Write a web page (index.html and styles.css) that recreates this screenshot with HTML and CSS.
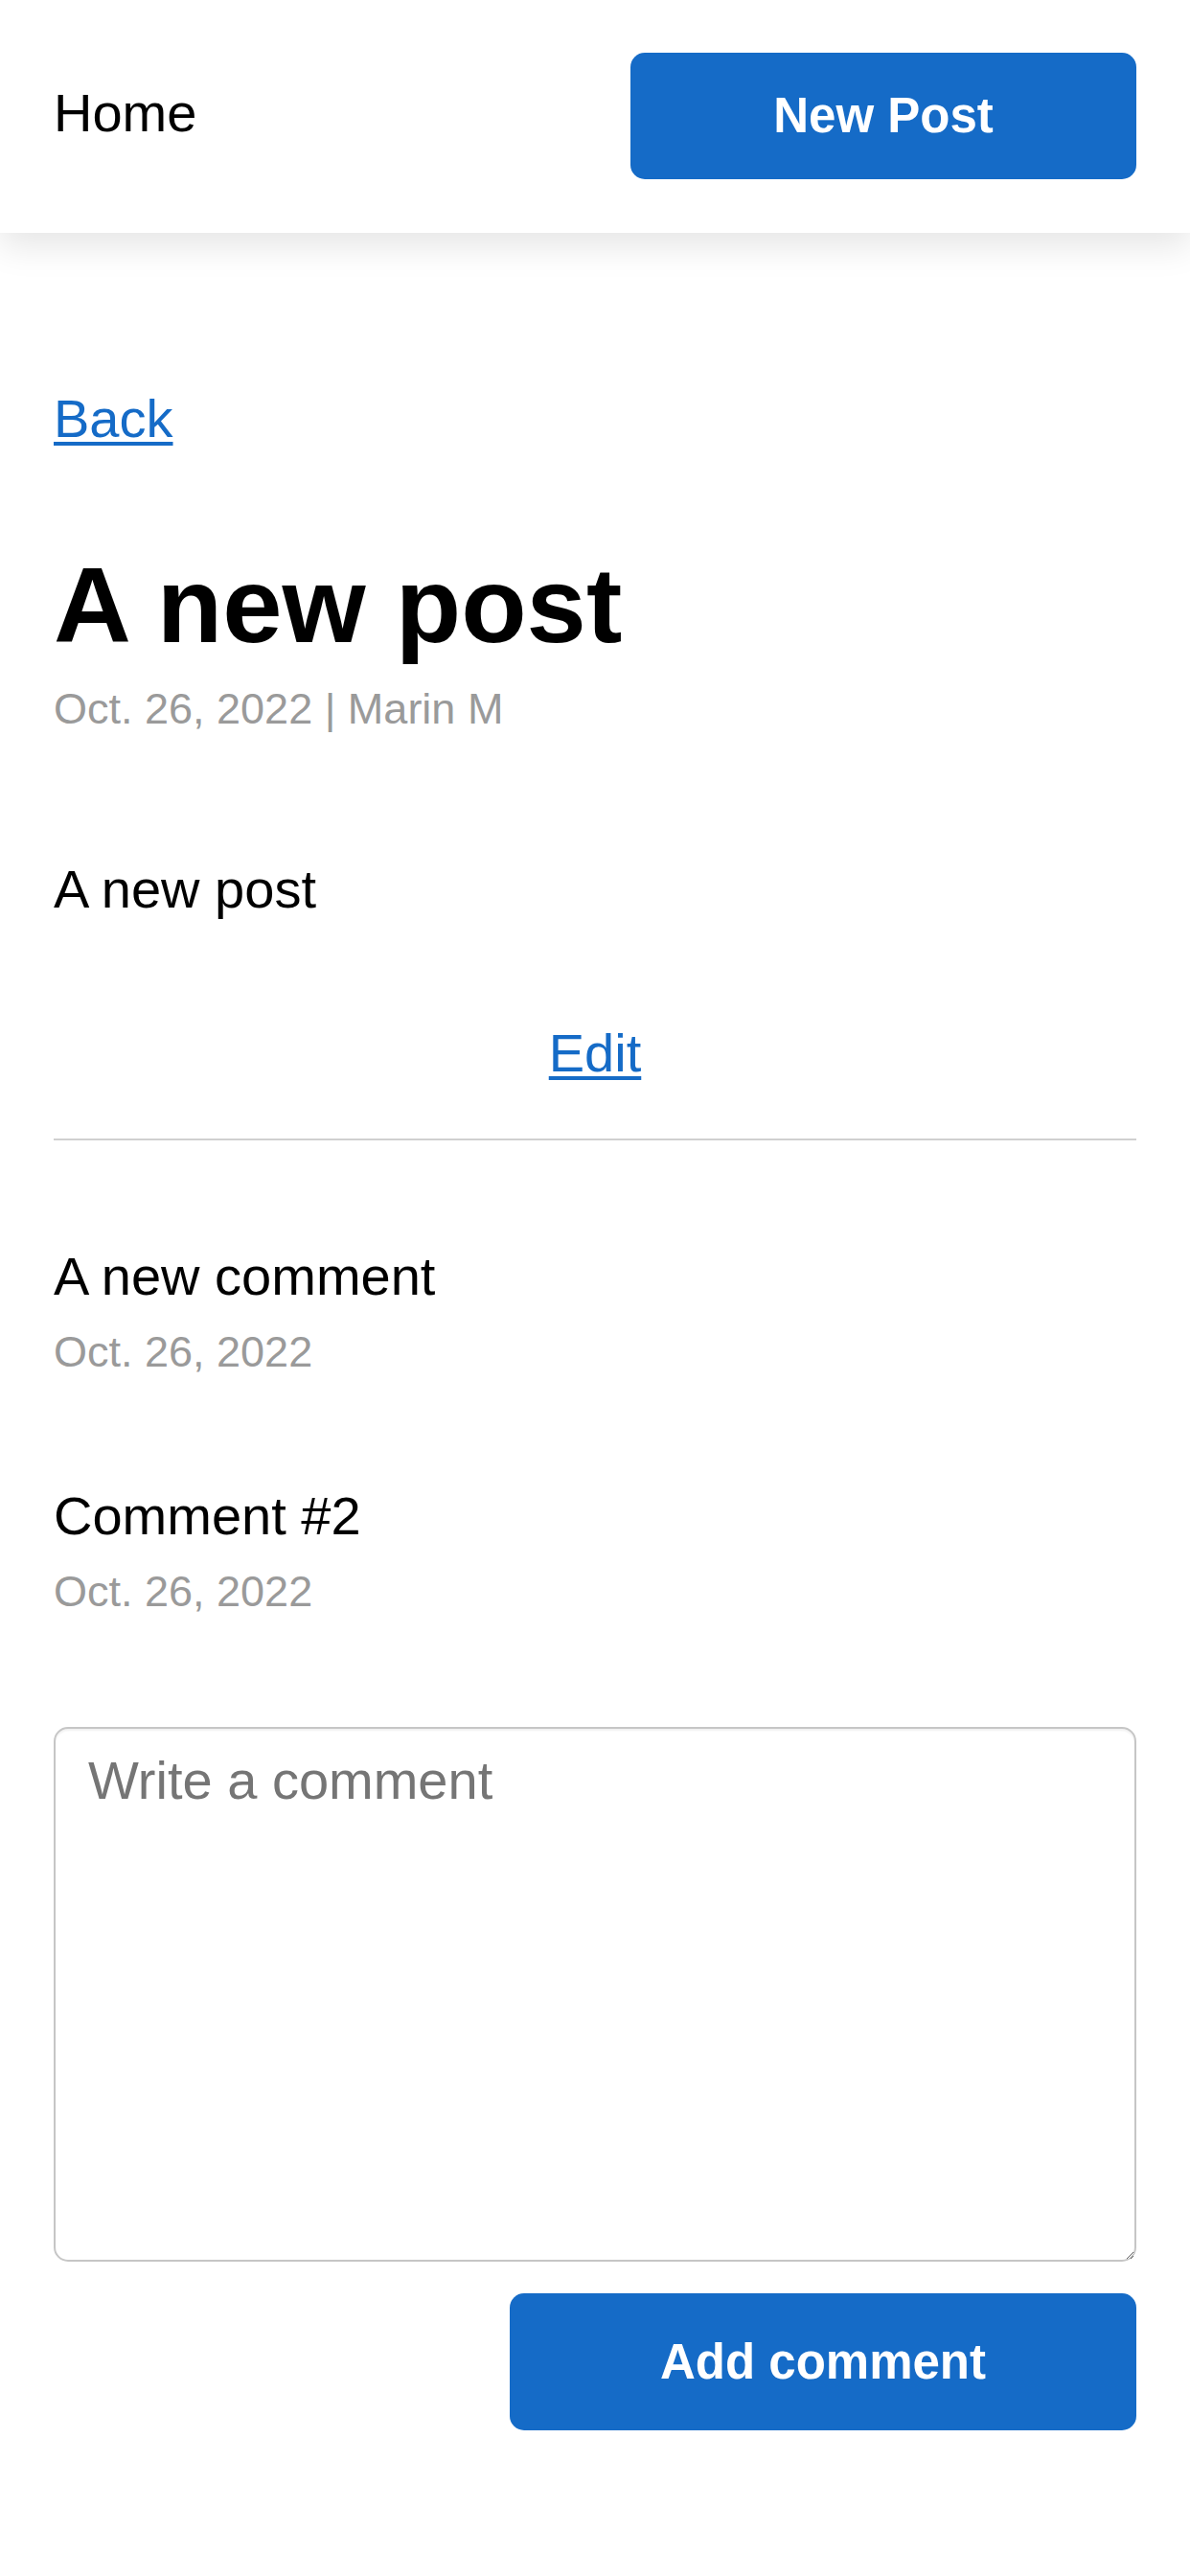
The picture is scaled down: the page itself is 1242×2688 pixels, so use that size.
FILE: index.html
```html
<!DOCTYPE html>
<html lang="en">
<head>
<meta charset="utf-8">
<title>A new post</title>
<link rel="stylesheet" href="styles.css">
</head>
<body>
<header class="topbar">
  <a class="home" href="#">Home</a>
  <a class="btn btn-new" href="#">New Post</a>
</header>
<main class="content">
  <a class="link back" href="#">Back</a>
  <h1 class="title">A new post</h1>
  <p class="meta">Oct. 26, 2022 | Marin M</p>
  <p class="body-text">A new post</p>
  <div class="edit-row"><a class="link" href="#">Edit</a></div>
  <hr class="divider">
  <section class="comments">
    <div class="comment">
      <p class="comment-text">A new comment</p>
      <p class="meta">Oct. 26, 2022</p>
    </div>
    <div class="comment">
      <p class="comment-text">Comment #2</p>
      <p class="meta">Oct. 26, 2022</p>
    </div>
  </section>
  <form class="comment-form">
    <textarea class="comment-input" placeholder="Write a comment"></textarea>
    <div class="form-actions">
      <button type="button" class="btn btn-add">Add comment</button>
    </div>
  </form>
</main>
</body>
</html>
```
FILE: styles.css
```css
* { box-sizing: border-box; }
html, body {
  margin: 0;
  padding: 0;
  background: #ffffff;
}
body {
  font-family: "Liberation Sans", Arial, Helvetica, sans-serif;
  color: #000;
  font-size: 56px;
  line-height: 64px;
}
.topbar {
  height: 243px;
  display: flex;
  align-items: center;
  justify-content: space-between;
  padding: 0 56px;
  background: #fff;
  box-shadow: 0 14px 34px rgba(0, 0, 0, 0.10);
  position: relative;
}
.home {
  color: #000;
  text-decoration: none;
  font-size: 56px;
  line-height: 64px;
  margin-top: -8px;
}
.btn {
  display: flex;
  align-items: center;
  justify-content: center;
  background: #156bc7;
  color: #fff;
  font-family: "Liberation Sans", Arial, Helvetica, sans-serif;
  font-weight: bold;
  font-size: 51px;
  text-decoration: none;
  border: none;
  border-radius: 15px;
}
.btn-new {
  width: 528px;
  height: 132px;
  margin-top: -1px;
}
.content {
  padding: 162px 56px 120px;
}
.link {
  color: #156bc7;
  text-decoration: underline;
  text-decoration-thickness: 4px;
  text-underline-offset: 5px;
}
.back {
  display: block;
  width: max-content;
  font-size: 56px;
  line-height: 64px;
}
.title {
  margin: 99px 0 0;
  font-size: 112px;
  line-height: 128px;
  font-weight: bold;
}
.meta {
  margin: 18px 0 0;
  font-size: 45px;
  line-height: 52px;
  color: #9a9a9a;
}
.body-text {
  margin: 130px 0 0;
}
.edit-row {
  margin-top: 107px;
  text-align: center;
}
.divider {
  margin: 57px 0 0;
  border: none;
  height: 2px;
  background: #d0d0d0;
}
.comments {
  display: flex;
  flex-direction: column;
  gap: 113px;
  margin-top: 110px;
}
.comment-text {
  margin: 0;
}
.comment .meta {
  margin-top: 21px;
}
.comment-form {
  margin-top: 115px;
}
.comment-input {
  display: block;
  width: 100%;
  height: 558px;
  padding: 22px 34px;
  border: 2px solid #c6c6c6;
  border-radius: 15px;
  font-family: "Liberation Sans", Arial, Helvetica, sans-serif;
  font-size: 56px;
  line-height: 64px;
  color: #000;
  background: #fff;
  box-shadow: inset 0 2px 2px rgba(0, 0, 0, 0.06);
  resize: both;
}
.comment-input::placeholder {
  color: #757575;
}
.form-actions {
  display: flex;
  justify-content: flex-end;
  margin-top: 33px;
}
.btn-add {
  width: 654px;
  height: 143px;
}
```
